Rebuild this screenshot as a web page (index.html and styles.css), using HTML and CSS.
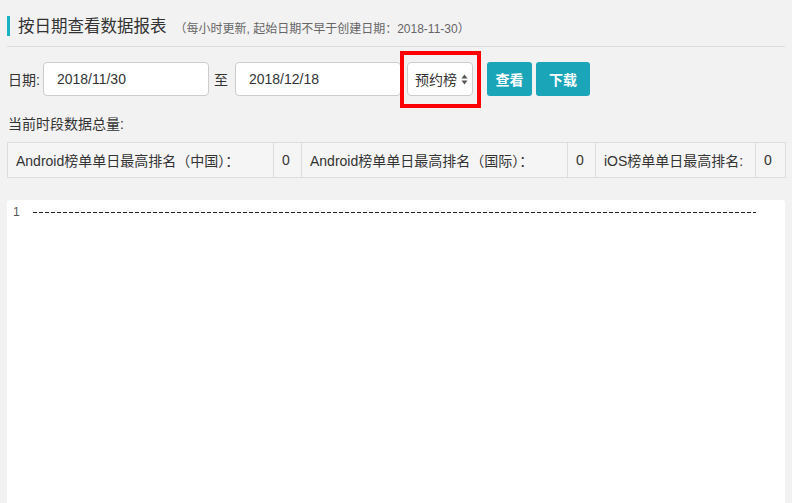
FILE: index.html
```html
<!DOCTYPE html>
<html lang="zh-CN">
<head>
  <meta charset="UTF-8">
  <title>按日期查看数据报表</title>
  <link rel="stylesheet" href="styles.css">
</head>
<body>
  <div class="container">
    <div class="title-bar">
      <h1>按日期查看数据报表</h1>
      <span class="sub">（每小时更新, 起始日期不早于创建日期：2018-11-30）</span>
    </div>

    <div class="filter">
      <label>日期:</label>
      <input class="date-input" type="text" value="2018/11/30">
      <span class="to">至</span>
      <input class="date-input" type="text" value="2018/12/18">
      <div class="select-wrap">
        <div class="select">
          <span>预约榜</span>
          <svg class="arrows" width="7" height="11" viewBox="0 0 7 11">
            <path d="M3.5 0.5 L6.5 4.5 L0.5 4.5 Z" fill="#555"/>
            <path d="M3.5 10.5 L6.5 6.5 L0.5 6.5 Z" fill="#555"/>
          </svg>
        </div>
        <div class="mark"></div>
      </div>
      <button class="btn btn-view">查看</button>
      <button class="btn btn-down">下载</button>
    </div>

    <div class="total-label">当前时段数据总量:</div>
    <table class="totals">
      <tr>
        <td class="name c1">Android榜单单日最高排名（中国）：</td>
        <td class="num">0</td>
        <td class="name c2">Android榜单单日最高排名（国际）：</td>
        <td class="num">0</td>
        <td class="name c3">iOS榜单单日最高排名:</td>
        <td class="num last">0</td>
      </tr>
    </table>

    <div class="editor">
      <div class="line">
        <span class="ln">1</span>
        <span class="dashes"></span>
      </div>
    </div>
  </div>
</body>
</html>
```

FILE: styles.css
```css
body {
  margin: 0;
  background-color: #f2f2f2;
  font-family: "Liberation Sans", "Noto Sans CJK SC", sans-serif;
  color: #333;
  font-size: 14px;
  overflow: hidden;
}

.container {
  padding: 0 7px;
}

.title-bar {
  display: flex;
  align-items: center;
  height: 47px;
  padding-top: 6px;
  box-sizing: border-box;
  border-bottom: 1px solid #dcdcdc;
  margin-bottom: 15px;
}

.title-bar h1 {
  margin: 0;
  font-size: 16.5px;
  font-weight: normal;
  line-height: 20px;
  border-left: 3px solid #19b1c4;
  padding-left: 8px;
  color: #333;
}

.title-bar .sub {
  font-size: 12px;
  color: #666;
  margin-left: 8px;
  padding-top: 2px;
}

.filter {
  display: flex;
  align-items: center;
  height: 34px;
}

.filter label {
  margin-left: 1px;
  margin-right: 3px;
}

.date-input {
  width: 166px;
  height: 34px;
  box-sizing: border-box;
  border: 1px solid #ccc;
  border-radius: 4px;
  background: #fff;
  padding: 0 13px;
  font-family: inherit;
  font-size: 14px;
  color: #333;
}

.to {
  margin: 0 7px 0 5px;
}

.select-wrap {
  position: relative;
  margin-left: 6px;
}

.select {
  display: flex;
  align-items: center;
  justify-content: space-between;
  width: 66px;
  height: 34px;
  box-sizing: border-box;
  border: 1px solid #ccc;
  border-radius: 4px;
  background: #fff;
  padding: 0 4px 0 7px;
}

.mark {
  position: absolute;
  left: -7px;
  top: -11px;
  width: 81px;
  height: 57px;
  box-sizing: border-box;
  border: 4px solid #f00;
}

.btn {
  height: 34px;
  padding: 0;
  border: none;
  border-radius: 3px;
  background-color: #1aa5b8;
  color: #fff;
  font-family: inherit;
  font-size: 14px;
  font-weight: bold;
}

.btn-view {
  margin-left: 14px;
  width: 45px;
}

.btn-down {
  margin-left: 4px;
  width: 54px;
}

.total-label {
  margin-top: 19px;
  margin-left: 1px;
  line-height: 18px;
}

.totals {
  margin-top: 9px;
  width: 778px;
  border-collapse: collapse;
  table-layout: fixed;
}

.totals td {
  height: 35px;
  box-sizing: border-box;
  border: 1px solid #ddd;
  padding: 0 0 0 8px;
  background: #f5f5f5;
  white-space: nowrap;
}

.totals .c1,
.totals .c2 {
  width: 266px;
}

.totals .c3 {
  width: 160px;
}

.totals .num {
  width: 28px;
}

.totals .last {
  width: 30px;
}

.editor {
  margin-top: 22px;
  height: 320px;
  background: #fff;
  border-radius: 3px;
  padding-top: 5px;
}

.line {
  display: flex;
  align-items: center;
  height: 14px;
}

.ln {
  width: 26px;
  padding-left: 6px;
  box-sizing: border-box;
  font-size: 12px;
  color: #555;
}

.dashes {
  width: 723px;
  height: 1px;
  background: repeating-linear-gradient(to right, #222 0, #222 4px, transparent 4px, transparent 6px);
}
```
